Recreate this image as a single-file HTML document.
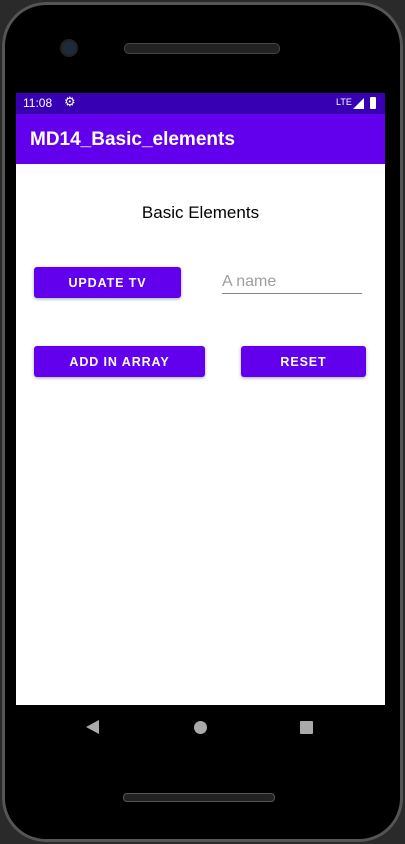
<!DOCTYPE html>
<html><head><style>
body{margin:0;width:405px;height:844px;background:#2a2a2a;overflow:hidden;font-family:"Liberation Sans",sans-serif;position:relative}
.phone{position:absolute;left:2px;top:2px;width:401px;height:840px;border-radius:44px;background:#000;box-shadow:inset 0 0 0 3px #555}
.abs{position:absolute}
.btn{position:absolute;background:#6200ee;color:#fff;font-size:12.5px;font-weight:bold;letter-spacing:0.9px;display:flex;align-items:center;justify-content:center;border-radius:3px;box-shadow:0 1px 3px rgba(0,0,0,.35)}
</style></head><body>
<div class="phone"></div>
<div class="abs" style="left:62px;top:41px;width:14px;height:14px;border-radius:50%;background:#1d2a3a;box-shadow:0 0 0 2px #222"></div>
<div class="abs" style="left:124px;top:43px;width:154px;height:9px;border-radius:5px;background:#222;border:1px solid #444"></div>
<div class="abs" style="left:16px;top:93px;width:369px;height:21px;background:#3700b3;color:#fff;font-size:12px">
 <span class="abs" style="left:7px;top:3px">11:08</span>
 <span class="abs" style="left:48px;top:1px;font-size:13px">⚙</span>
 <span class="abs" style="left:320px;top:4px;font-size:9px">LTE</span>
 <svg class="abs" style="left:337px;top:5px" width="11" height="11"><path d="M0 11L11 0V11Z" fill="#fff"/></svg>
 <div class="abs" style="left:354px;top:4px;width:6px;height:12px;background:#fff;border-radius:1px"></div>
</div>
<div class="abs" style="left:16px;top:114px;width:369px;height:50px;background:#6200ee;color:#fff;font-size:19px;font-weight:bold"><span class="abs" style="left:14px;top:15px">MD14_Basic_elements</span></div>
<div class="abs" style="left:16px;top:164px;width:369px;height:541px;background:#fff"></div>
<div class="abs" style="left:16px;top:203px;width:369px;text-align:center;font-size:17px;color:#000">Basic Elements</div>
<div class="btn" style="left:34px;top:267px;width:147px;height:31px">UPDATE TV</div>
<div class="abs" style="left:222px;top:273px;font-size:16px;color:#9e9e9e">A name</div>
<div class="abs" style="left:222px;top:293px;width:140px;height:1px;background:#888"></div>
<div class="btn" style="left:34px;top:346px;width:171px;height:31px">ADD IN ARRAY</div>
<div class="btn" style="left:241px;top:346px;width:125px;height:31px">RESET</div>
<svg class="abs" style="left:86px;top:719px" width="14" height="16"><path d="M0 8L13 1V15Z" fill="#aaa"/></svg>
<div class="abs" style="left:194px;top:721px;width:13px;height:13px;border-radius:50%;background:#aaa"></div>
<div class="abs" style="left:300px;top:721px;width:13px;height:13px;border-radius:1px;background:#aaa"></div>
<div class="abs" style="left:123px;top:793px;width:150px;height:7px;border-radius:4px;background:#222;border:1px solid #555"></div>
</body></html>
